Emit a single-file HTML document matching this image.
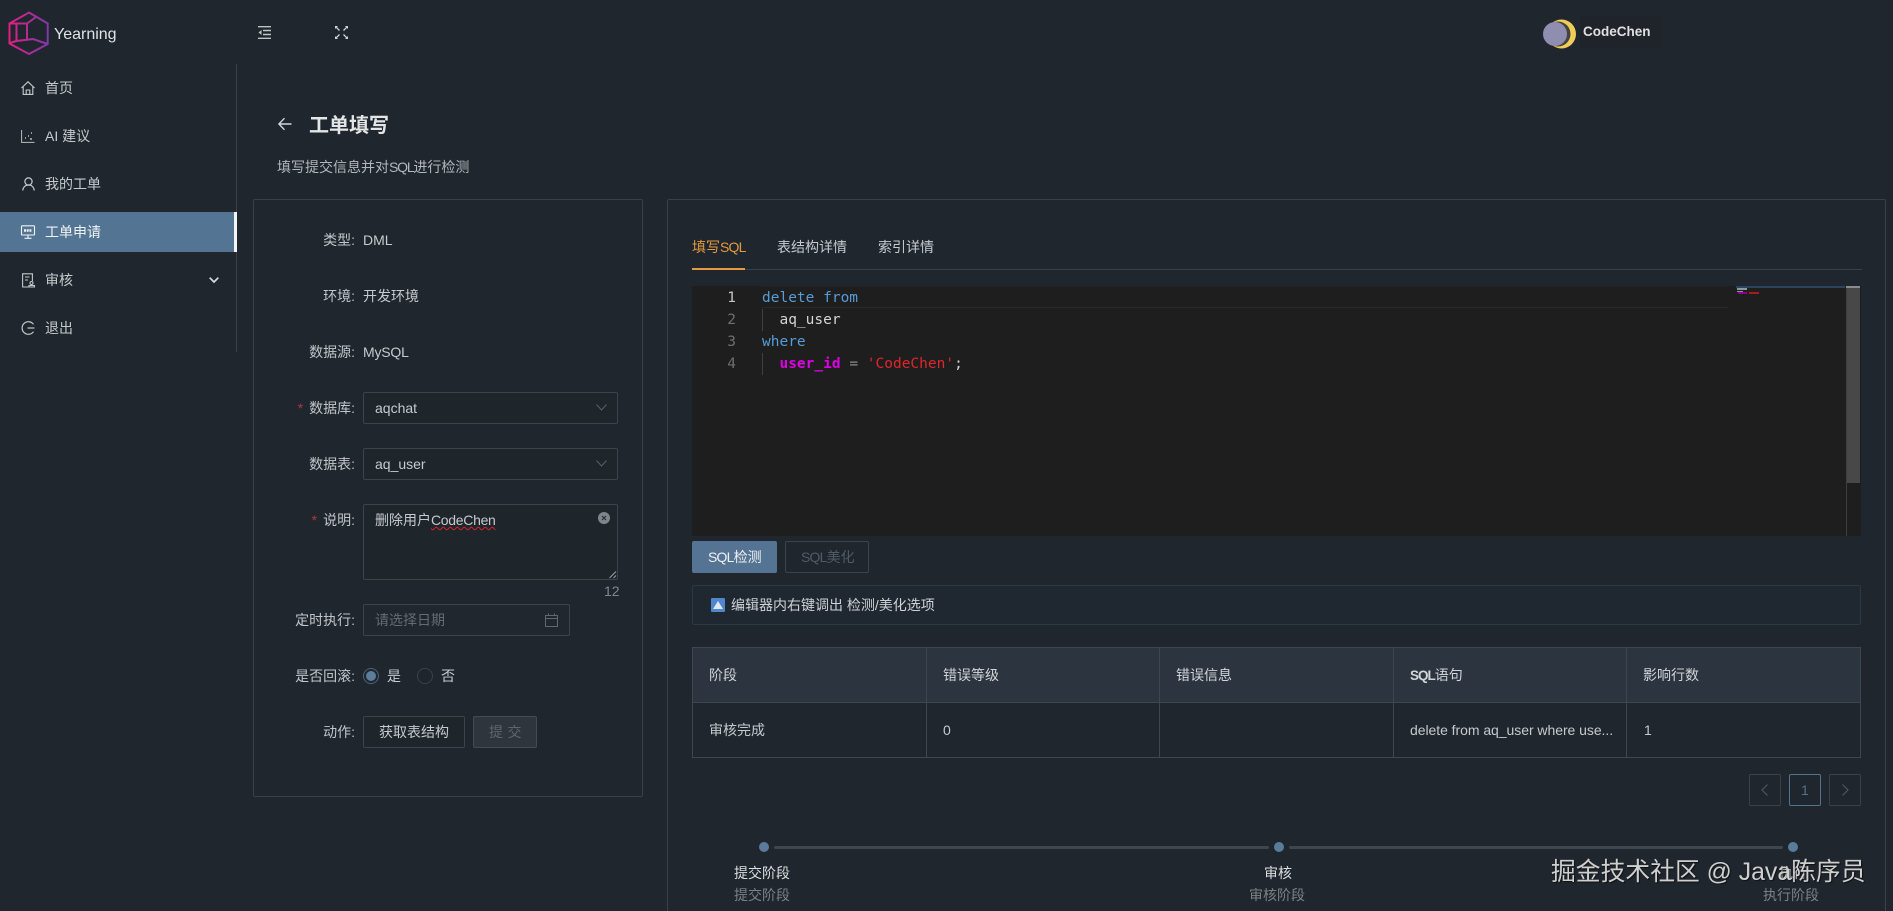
<!DOCTYPE html>
<html lang="zh">
<head>
<meta charset="utf-8">
<title>Yearning</title>
<style>
html,body{margin:0;padding:0;width:1893px;height:911px;overflow:hidden;background:#1f262d}
body{position:relative;font-family:"Liberation Sans","Noto Sans CJK SC",sans-serif;font-size:14px;color:#c6cacd}
.t{position:absolute;white-space:nowrap;line-height:20px;height:20px}
.b{position:absolute;box-sizing:border-box}
.l{text-align:right;right:1538px;color:#c2c6c9}
.star{color:#a83a3c;margin-right:6px}
.m{color:#c6cacd}
.q{letter-spacing:-.8px}
svg{position:absolute;overflow:visible}
.code{position:absolute;font-family:"DejaVu Sans Mono","Liberation Mono",monospace;font-size:14.5px;line-height:22px;white-space:pre;height:22px}
.num{position:absolute;font-family:"DejaVu Sans Mono","Liberation Mono",monospace;font-size:14.5px;line-height:22px;width:30px;text-align:right;left:706px;color:#6e7070}
.th{font-weight:400;color:#d2d5d8}
</style>
</head>
<body>

<!-- logo -->
<svg style="left:0;top:0" width="60" height="60" viewBox="0 0 60 60" fill="none">
<defs><linearGradient id="g" x1="9" x2="48" y1="0" y2="0" gradientUnits="userSpaceOnUse"><stop offset="0" stop-color="#e01f82"/><stop offset="1" stop-color="#7e3aa6"/></linearGradient></defs>
<path d="M29 12.500 47.700 23.500V44L29 54 9.500 43.500V23.500Z M9.500 23.500H27L36 17 M16.500 24V41 M27 24V40 M9.500 43 16.500 41 33 39 47.700 44" stroke="url(#g)" stroke-width="2"/>
</svg>
<div class="t" style="left:54px;top:25px;font-size:16px;color:#dfe2e4">Yearning</div>

<!-- header icons -->
<svg style="left:258px;top:26px" width="13" height="13" viewBox="0 0 13 13" fill="none" stroke="#c0c4c7" stroke-width="1.400">
<path d="M0 .7H13M5 4.500H13M5 8.500H13M0 12.300H13"/><path d="M3.500 4V9L.5 6.500Z" fill="#c0c4c7" stroke="none"/>
</svg>
<svg style="left:335px;top:26px" width="13" height="13" viewBox="0 0 13 13" fill="none" stroke="#d0d3d5" stroke-width="1.300">
<path d="M.8 .8 4.500 4.500M12.200 .8 8.500 4.500M.8 12.200 4.500 8.500M12.200 12.200 8.500 8.500"/>
<path d="M0 0H3L0 3ZM13 0H10L13 3ZM0 13H3L0 10ZM13 13H10L13 10Z" fill="#d0d3d5" stroke="none"/>
</svg>

<!-- user -->
<div class="b" style="left:1580px;top:16px;width:83px;height:32px;background:#1e2429"></div>
<svg style="left:1540px;top:16px" width="40" height="36" viewBox="0 0 40 36">
<circle cx="21.500" cy="18" r="14.500" fill="#f0cc58"/>
<circle cx="18" cy="18" r="12.500" fill="#45433f"/>
<circle cx="15" cy="18" r="12" fill="#8f8db0"/>
</svg>
<div class="t" style="left:1583px;top:22px;font-size:13.500px;font-weight:700;color:#dde0e2">CodeChen</div>

<!-- sidebar -->
<div class="b" style="left:236px;top:64px;width:1px;height:288px;background:#3a4249"></div>
<div class="b" style="left:0;top:212px;width:234px;height:40px;background:#547493"></div>
<div class="b" style="left:234px;top:212px;width:3px;height:40px;background:#f2f4f6"></div>

<svg style="left:21px;top:81px" width="14" height="14" viewBox="0 0 14 14" fill="none" stroke="#c6cacd" stroke-width="1.100"><path d="M.5 7 7 .8 13.500 7M2.200 6V13.400H11.800V6M5.200 13.400V9H8.800V13.400"/></svg>
<div class="t m" style="left:45px;top:78px">首页</div>
<svg style="left:21px;top:130px" width="14" height="13" viewBox="0 0 14 13" fill="none" stroke="#b9bdc0" stroke-width="1"><path d="M.6 0V12.400H13.500"/><path d="M4 8h1M7 6h1M9 9h2M10 3h1" stroke-width="1.400"/></svg>
<div class="t m" style="left:45px;top:126px">AI 建议</div>
<svg style="left:22px;top:177px" width="13" height="14" viewBox="0 0 13 14" fill="none" stroke="#c6cacd" stroke-width="1.200"><circle cx="6.500" cy="4.500" r="3.600"/><path d="M.7 13.500C1.200 10 3.500 8 6.500 8S11.800 10 12.300 13.500"/></svg>
<div class="t m" style="left:45px;top:174px">我的工单</div>
<svg style="left:21px;top:225px" width="14" height="14" viewBox="0 0 14 14" fill="none" stroke="#f0f2f4" stroke-width="1.100"><rect x=".5" y=".8" width="13" height="9.200" rx=".8"/><path d="M7 10V13M3.500 13.300H10.500"/><path d="M3 5.500H11" stroke-width="2.600" stroke-dasharray="2 .7"/></svg>
<div class="t" style="left:45px;top:222px;color:#f0f2f4">工单申请</div>
<svg style="left:22px;top:273px" width="13" height="15" viewBox="0 0 13 15" fill="none" stroke="#c4c8cb" stroke-width="1.100"><path d="M9 14H.6V.8H10.400V8M3 4H7.500M3 7H6"/><circle cx="9.500" cy="10" r="1.500"/><path d="M7 14H12.500V12.500H7Z"/></svg>
<div class="t m" style="left:45px;top:270px">审核</div>
<svg style="left:209px;top:277px" width="10" height="6" viewBox="0 0 10 6" fill="none" stroke="#d8dbdd" stroke-width="1.700"><path d="M.7.7 5 5 9.300.7"/></svg>
<svg style="left:21px;top:321px" width="14" height="14" viewBox="0 0 14 14" fill="none" stroke="#c4c8cb" stroke-width="1.200"><path d="M12.500 3.300A6.300 6.300 0 1 0 12.500 10.700"/><path d="M6.500 7H13.500"/></svg>
<div class="t m" style="left:45px;top:318px">退出</div>

<!-- title -->
<svg style="left:278px;top:117px" width="14" height="14" viewBox="0 0 14 14" fill="none" stroke="#d4d7da" stroke-width="1.400"><path d="M13.500 7H1M6.500 1.200.9 7 6.500 12.800"/></svg>
<div class="t" style="left:309px;top:112px;height:28px;line-height:28px;font-size:20px;font-weight:700;color:#e3e5e7">工单填写</div>
<div class="t" style="left:277px;top:157px;color:#b3b7ba">填写提交信息并对<span class="q" style="letter-spacing:-1.200px">SQL</span>进行检测</div>

<!-- left card -->
<div class="b" style="left:253px;top:199px;width:390px;height:598px;border:1px solid #384049;border-radius:2px"></div>

<div class="t l" style="top:230px">类型:</div><div class="t" style="left:363px;top:230px">DML</div>
<div class="t l" style="top:286px">环境:</div><div class="t" style="left:363px;top:286px">开发环境</div>
<div class="t l" style="top:342px">数据源:</div><div class="t" style="left:363px;top:342px;letter-spacing:-.2px">MySQL</div>

<div class="t l" style="top:398px"><span class="star">*</span>数据库:</div>
<div class="b" style="left:363px;top:392px;width:255px;height:32px;border:1px solid #3b434b;border-radius:2px;background:#1e252b"></div>
<div class="t" style="left:375px;top:398px">aqchat</div>
<svg style="left:596px;top:404px" width="11" height="7" viewBox="0 0 11 7" fill="none" stroke="#56616b" stroke-width="1"><path d="M.5.5 5.500 6 10.500 .5"/></svg>

<div class="t l" style="top:454px">数据表:</div>
<div class="b" style="left:363px;top:448px;width:255px;height:32px;border:1px solid #3b434b;border-radius:2px;background:#1e252b"></div>
<div class="t" style="left:375px;top:454px">aq_user</div>
<svg style="left:596px;top:460px" width="11" height="7" viewBox="0 0 11 7" fill="none" stroke="#56616b" stroke-width="1"><path d="M.5.5 5.500 6 10.500 .5"/></svg>

<div class="t l" style="top:510px"><span class="star">*</span>说明:</div>
<div class="b" style="left:363px;top:504px;width:255px;height:76px;border:1px solid #3b434b;border-radius:2px;background:#1e252b"></div>
<div class="t" style="left:375px;top:510px">删除用户<span style="letter-spacing:-.3px;text-decoration:underline wavy #d8232a 1px;text-underline-offset:1px">CodeChen</span></div>
<svg style="left:598px;top:512px" width="12" height="12" viewBox="0 0 12 12"><circle cx="6" cy="6" r="6" fill="#7d878c"/><path d="M4 4 8 8M8 4 4 8" stroke="#2a3036" stroke-width="1.200"/></svg>
<svg style="left:609px;top:571px" width="8" height="8" viewBox="0 0 8 8" stroke="#9aa0a4" stroke-width="1" fill="none"><path d="M.5 7 7 .5M4.500 7 7 4.500"/></svg>
<div class="t" style="left:604px;top:581px;color:#7f888d">12</div>

<div class="t l" style="top:610px">定时执行:</div>
<div class="b" style="left:363px;top:604px;width:207px;height:32px;border:1px solid #3b434b;border-radius:2px;background:#20272e"></div>
<div class="t" style="left:375px;top:610px;color:#626c74">请选择日期</div>
<svg style="left:545px;top:613px" width="13" height="14" viewBox="0 0 13 14" fill="none" stroke="#5e6870" stroke-width="1"><path d="M.5 2.500H12.500V13.500H.5ZM.5 5.500H12.500M3.500 .5V3M9.500 .5V3"/></svg>

<div class="t l" style="top:666px">是否回滚:</div>
<svg style="left:363px;top:668px" width="16" height="16" viewBox="0 0 16 16"><circle cx="8" cy="8" r="7.500" fill="none" stroke="#4c6278"/><circle cx="8" cy="8" r="5" fill="#5e7c9c"/></svg>
<div class="t" style="left:387px;top:666px">是</div>
<svg style="left:417px;top:668px" width="16" height="16" viewBox="0 0 16 16"><circle cx="8" cy="8" r="7.500" fill="#1e252b" stroke="#38424b"/></svg>
<div class="t" style="left:441px;top:666px">否</div>

<div class="t l" style="top:722px">动作:</div>
<div class="b" style="left:363px;top:716px;width:102px;height:32px;border:1px solid #3b434b;border-radius:2px;background:#1e252b"></div>
<div class="t" style="left:379px;top:722px">获取表结构</div>
<div class="b" style="left:473px;top:716px;width:64px;height:32px;border:1px solid #424a52;border-radius:2px;background:#2e353c"></div>
<div class="t" style="left:489px;top:722px;color:#5e666d;letter-spacing:.3px">提 交</div>

<!-- right card -->
<div class="b" style="left:667px;top:199px;width:1219px;height:740px;border:1px solid #384049;border-radius:2px"></div>
<div class="t" style="left:692px;top:237px;color:#e39a3f">填写<span class="q">SQL</span></div>
<div class="t" style="left:777px;top:237px">表结构详情</div>
<div class="t" style="left:878px;top:237px">索引详情</div>
<div class="b" style="left:692px;top:269px;width:1170px;height:1px;background:#384049"></div>
<div class="b" style="left:692px;top:268px;width:53px;height:2px;background:#e39a3f"></div>

<!-- editor -->
<div class="b" style="left:692px;top:286px;width:1169px;height:250px;background:#1e1e1e"></div>
<div class="b" style="left:762px;top:286px;width:966px;height:22px;border-top:1px solid #222;border-bottom:1px solid #282828"></div>
<div class="b" style="left:762px;top:309px;width:1px;height:22px;background:#404040"></div>
<div class="b" style="left:762px;top:353px;width:1px;height:22px;background:#404040"></div>
<div class="num" style="top:287px;color:#c6c6c6">1</div>
<div class="num" style="top:309px">2</div>
<div class="num" style="top:331px">3</div>
<div class="num" style="top:353px">4</div>
<div class="code" style="left:762px;top:287px;color:#569cd6">delete from</div>
<div class="code" style="left:762px;top:309px;color:#d4d4d4">  aq_user</div>
<div class="code" style="left:762px;top:331px;color:#569cd6">where</div>
<div class="code" style="left:762px;top:353px;color:#d4d4d4">  <span style="color:#dc00e4;font-weight:700">user_id</span> <span style="color:#8a8a8a">=</span> <span style="color:#e0262a">'CodeChen'</span>;</div>
<!-- minimap -->
<div class="b" style="left:1736px;top:286px;width:109px;height:2px;background:#2b4560"></div>
<div class="b" style="left:1737px;top:288px;width:10px;height:2px;background:#8a97a2"></div>
<div class="b" style="left:1737px;top:291px;width:6px;height:1px;background:#8a97a2"></div>
<div class="b" style="left:1738px;top:292px;width:9px;height:2px;background:#8a0090"></div>
<div class="b" style="left:1749px;top:292px;width:10px;height:2px;background:#a81a1e"></div>
<!-- scrollbar -->
<div class="b" style="left:1846px;top:286px;width:1px;height:250px;background:#3e3e3e"></div>
<div class="b" style="left:1847px;top:286px;width:13px;height:197px;background:#484848"></div>
<div class="b" style="left:1846px;top:286px;width:14px;height:2px;background:#8c8c8c"></div>

<!-- buttons under editor -->
<div class="b" style="left:692px;top:541px;width:85px;height:32px;background:#557493;border-radius:2px"></div>
<div class="t" style="left:708px;top:547px;color:#eef0f2"><span class="q">SQL</span>检测</div>
<div class="b" style="left:785px;top:541px;width:84px;height:32px;border:1px solid #3a444e;border-radius:2px"></div>
<div class="t" style="left:801px;top:547px;color:#505b65"><span class="q">SQL</span>美化</div>

<!-- alert -->
<div class="b" style="left:692px;top:585px;width:1169px;height:40px;border:1px solid #2c3842;border-radius:2px;background:#1f2831"></div>
<svg style="left:711px;top:598px" width="14" height="14" viewBox="0 0 14 14"><rect width="14" height="14" rx="1" fill="#4f86cc"/><path d="M7 3 12 11H2Z" fill="#dfe8f2"/></svg>
<div class="t" style="left:731px;top:595px;color:#cfd2d5">编辑器内右键调出 检测/美化选项</div>

<!-- table -->
<div class="b" style="left:692px;top:647px;width:1169px;height:111px;border:1px solid #3e464e"></div>
<div class="b" style="left:693px;top:648px;width:1167px;height:54px;background:#2c343f"></div>
<div class="b" style="left:692px;top:702px;width:1169px;height:1px;background:#3e464e"></div>
<div class="b" style="left:926px;top:647px;width:1px;height:111px;background:#3e464e"></div>
<div class="b" style="left:1159px;top:647px;width:1px;height:111px;background:#3e464e"></div>
<div class="b" style="left:1393px;top:647px;width:1px;height:111px;background:#3e464e"></div>
<div class="b" style="left:1626px;top:647px;width:1px;height:111px;background:#3e464e"></div>
<div class="t th" style="left:709px;top:665px">阶段</div>
<div class="t th" style="left:943px;top:665px">错误等级</div>
<div class="t th" style="left:1176px;top:665px">错误信息</div>
<div class="t th" style="left:1410px;top:665px"><span style="font-weight:700;font-size:13.500px;letter-spacing:-1px">SQL</span>语句</div>
<div class="t th" style="left:1643px;top:665px">影响行数</div>
<div class="t" style="left:709px;top:720px">审核完成</div>
<div class="t" style="left:943px;top:720px">0</div>
<div class="t" style="left:1410px;top:720px;letter-spacing:-.05px">delete from aq_user where use...</div>
<div class="t" style="left:1644px;top:720px">1</div>

<!-- pagination -->
<div class="b" style="left:1749px;top:774px;width:32px;height:32px;border:1px solid #38424b;border-radius:2px"></div>
<svg style="left:1761px;top:784px" width="7" height="12" viewBox="0 0 7 12" fill="none" stroke="#4e5962" stroke-width="1.100"><path d="M6.500.5 1 6 6.500 11.500"/></svg>
<div class="b" style="left:1789px;top:774px;width:32px;height:32px;border:1px solid #54718d;border-radius:2px"></div>
<div class="t" style="left:1801px;top:780px;color:#54718d">1</div>
<div class="b" style="left:1829px;top:774px;width:32px;height:32px;border:1px solid #38424b;border-radius:2px"></div>
<svg style="left:1842px;top:784px" width="7" height="12" viewBox="0 0 7 12" fill="none" stroke="#4e5962" stroke-width="1.100"><path d="M.5.5 6 6 .5 11.500"/></svg>

<!-- steps -->
<div class="b" style="left:759px;top:842px;width:10px;height:10px;border-radius:50%;background:#5b7b9d"></div>
<div class="b" style="left:774px;top:846px;width:495px;height:3px;border-radius:2px;background:#3e464e"></div>
<div class="b" style="left:1274px;top:842px;width:10px;height:10px;border-radius:50%;background:#5b7b9d"></div>
<div class="b" style="left:1289px;top:846px;width:494px;height:3px;border-radius:2px;background:#3e464e"></div>
<div class="b" style="left:1788px;top:842px;width:10px;height:10px;border-radius:50%;background:#5b7b9d"></div>
<div class="t" style="left:734px;top:863px;color:#dcdfe1">提交阶段</div>
<div class="t" style="left:734px;top:885px;color:#7a8288">提交阶段</div>
<div class="t" style="left:1264px;top:863px;color:#dcdfe1">审核</div>
<div class="t" style="left:1249px;top:885px;color:#7a8288">审核阶段</div>
<div class="t" style="left:1779px;top:863px;color:#dcdfe1">执行</div>
<div class="t" style="left:1763px;top:885px;color:#7a8288">执行阶段</div>

<!-- watermark -->
<div class="t" style="left:1551px;top:856px;height:34px;line-height:34px;font-size:24.800px;color:#cfcfcf;text-shadow:1px 1px 1px rgba(0,0,0,.55)">掘金技术社区 @ Java陈序员</div>

</body>
</html>
